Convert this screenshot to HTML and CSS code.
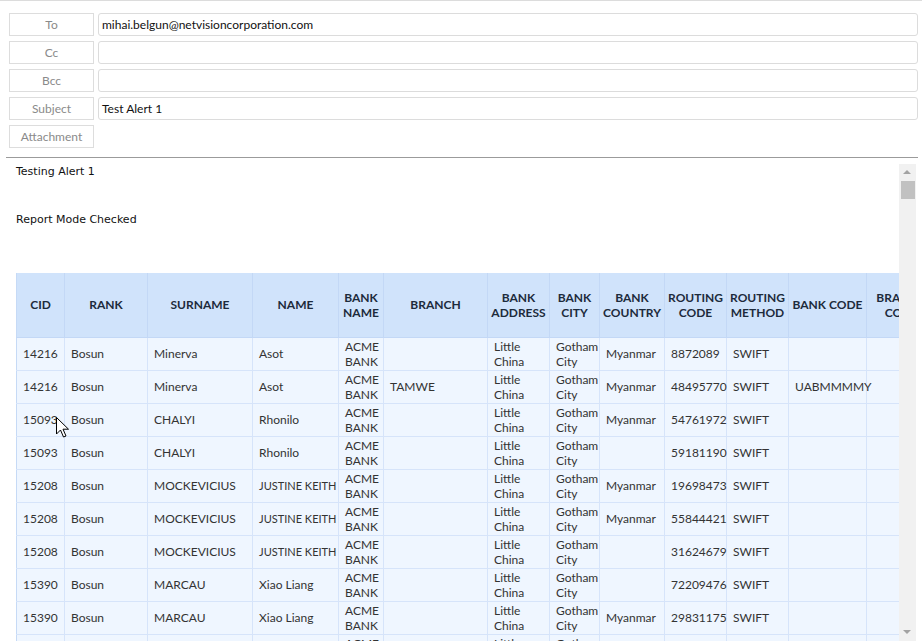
FILE: index.html
```html
<!DOCTYPE html>
<html lang="en">
<head>
  <meta charset="UTF-8" />
  <meta name="viewport" content="width=device-width, initial-scale=1.0" />
  <title>Compose – Test Alert 1</title>

  <!-- styles -->
  <link rel="stylesheet" href="styles.css">
</head>

<body>
  <!-- header fields -->
  <section class="fields">
    <div class="field"><span class="label">To</span><div class="input">mihai.belgun@netvisioncorporation.com</div></div>
    <div class="field"><span class="label">Cc</span><div class="input"></div></div>
    <div class="field"><span class="label">Bcc</span><div class="input"></div></div>
    <div class="field"><span class="label">Subject</span><div class="input">Test Alert 1</div></div>
    <div class="field"><span class="label">Attachment</span></div>
  </section>

  <!-- message body -->
  <main class="body">
    <div class="content">
      <p class="msg">Testing Alert 1</p>
      <p class="msg mode">Report Mode Checked</p>

      <table class="report">
        <colgroup>
          <col style="width:48px"><col style="width:83px"><col style="width:105px"><col style="width:86px">
          <col style="width:45px"><col style="width:104px"><col style="width:62px"><col style="width:50px">
          <col style="width:65px"><col style="width:62px"><col style="width:62px"><col style="width:78px">
          <col style="width:70px">
        </colgroup>
        <thead>
          <tr>
            <th>CID</th><th>RANK</th><th>SURNAME</th><th>NAME</th><th>BANK NAME</th><th>BRANCH</th>
            <th>BANK ADDRESS</th><th>BANK CITY</th><th>BANK COUNTRY</th><th>ROUTING CODE</th>
            <th>ROUTING METHOD</th><th class="one">BANK CODE</th><th>BRANCH CODE</th>
          </tr>
        </thead>
        <tbody>
          <tr><td>14216</td><td>Bosun</td><td>Minerva</td><td>Asot</td><td>ACME BANK</td><td></td><td>Little China</td><td>Gotham City</td><td>Myanmar</td><td>8872089</td><td>SWIFT</td><td></td><td></td></tr>
          <tr><td>14216</td><td>Bosun</td><td>Minerva</td><td>Asot</td><td>ACME BANK</td><td>TAMWE</td><td>Little China</td><td>Gotham City</td><td>Myanmar</td><td>48495770</td><td>SWIFT</td><td>UABMMMMY</td><td></td></tr>
          <tr><td>15093</td><td>Bosun</td><td>CHALYI</td><td>Rhonilo</td><td>ACME BANK</td><td></td><td>Little China</td><td>Gotham City</td><td>Myanmar</td><td>54761972</td><td>SWIFT</td><td></td><td></td></tr>
          <tr><td>15093</td><td>Bosun</td><td>CHALYI</td><td>Rhonilo</td><td>ACME BANK</td><td></td><td>Little China</td><td>Gotham City</td><td></td><td>59181190</td><td>SWIFT</td><td></td><td></td></tr>
          <tr><td>15208</td><td>Bosun</td><td>MOCKEVICIUS</td><td class="one">JUSTINE KEITH</td><td>ACME BANK</td><td></td><td>Little China</td><td>Gotham City</td><td>Myanmar</td><td>19698473</td><td>SWIFT</td><td></td><td></td></tr>
          <tr><td>15208</td><td>Bosun</td><td>MOCKEVICIUS</td><td class="one">JUSTINE KEITH</td><td>ACME BANK</td><td></td><td>Little China</td><td>Gotham City</td><td>Myanmar</td><td>55844421</td><td>SWIFT</td><td></td><td></td></tr>
          <tr><td>15208</td><td>Bosun</td><td>MOCKEVICIUS</td><td class="one">JUSTINE KEITH</td><td>ACME BANK</td><td></td><td>Little China</td><td>Gotham City</td><td></td><td>31624679</td><td>SWIFT</td><td></td><td></td></tr>
          <tr><td>15390</td><td>Bosun</td><td>MARCAU</td><td>Xiao Liang</td><td>ACME BANK</td><td></td><td>Little China</td><td>Gotham City</td><td></td><td>72209476</td><td>SWIFT</td><td></td><td></td></tr>
          <tr><td>15390</td><td>Bosun</td><td>MARCAU</td><td>Xiao Liang</td><td>ACME BANK</td><td></td><td>Little China</td><td>Gotham City</td><td>Myanmar</td><td>29831175</td><td>SWIFT</td><td></td><td></td></tr>
          <tr><td>15390</td><td>Bosun</td><td>MARCAU</td><td>Xiao Liang</td><td>ACME BANK</td><td></td><td>Little China</td><td>Gotham City</td><td>Myanmar</td><td>10477250</td><td>SWIFT</td><td></td><td></td></tr>
        </tbody>
      </table>
    </div>

    <!-- fake scrollbar -->
    <div class="scrollbar" aria-hidden="true">
      <span class="arrow up"></span>
      <span class="thumb"></span>
      <span class="track"></span>
      <span class="arrow down"></span>
    </div>
  </main>

  <!-- mouse pointer -->
  <svg class="cursor" width="13" height="21" viewBox="0 0 13 21" aria-hidden="true">
    <path d="M.5 .5v16.5l4-4 3 7 2.5-1-3-6.8h5.5z" fill="#fff" stroke="#000" stroke-width="1" stroke-linejoin="round"/>
  </svg>
</body>
</html>
```

FILE: styles.css
```css
/* ─── 0. reset ───────────────────────────── */
*,*::before,*::after{box-sizing:border-box;margin:0;padding:0}
html,body{width:100%;height:100%;overflow:hidden;background:#fff}
body{
  border-top:1px solid #dcdcdc;
  font-family:Lato,"Noto Sans",sans-serif;color:#222;
  display:flex;flex-direction:column;
}

/* ─── 1. header fields ───────────────────── */
.fields{display:flex;flex-direction:column;gap:5px;padding:12px 4px 0 9px}
.field{display:flex;gap:4px;height:23px}
.label{
  flex:0 0 85px;display:flex;align-items:center;justify-content:center;
  border:1px solid #dddddd;color:#8a8a8a;font-size:12px;
}
.input{
  flex:1;display:flex;align-items:center;padding-left:3px;
  border:1px solid #dcdcdc;border-radius:3px;font-size:12px;color:#111;
}

/* ─── 2. message body ────────────────────── */
.body{
  flex:1;min-height:0;display:flex;
  margin:9px 4px 0 6px;padding-top:6px;
  border-top:1px solid #9b9b9b;
}
.content{flex:1;min-width:0;overflow:hidden;padding-left:10px}
.msg{font-family:"DejaVu Sans",sans-serif;font-size:11px;line-height:14px;color:#111;padding-top:1px}
.mode{margin-top:33px}

.report{
  margin-top:46px;width:920px;table-layout:fixed;border-collapse:collapse;
  font-size:12px;line-height:15px;color:#333;
}
.report th{
  height:64px;padding:0 2px;background:#d0e3fb;
  border:1px solid #c3d8f6;border-top:0;
  color:#1d2b3c;font-weight:700;text-align:center;vertical-align:middle;
  overflow:hidden;
}
.report td{
  height:33px;padding:0 3px 0 6px;background:#eff6ff;
  border:1px solid #d6e4fa;vertical-align:middle;text-align:left;
}
.report .one{white-space:nowrap}
.report td.one{font-size:11px}
.report tr > :first-child{border-left:1px solid #c6daf6}

/* ─── 3. scrollbar ───────────────────────── */
.scrollbar{flex:0 0 17px;display:flex;flex-direction:column;align-items:center;background:#f1f1f1;margin-right:2px}
.arrow{flex:0 0 17px;width:17px;position:relative}
.arrow::after{
  content:"";position:absolute;left:4px;top:6px;
  border-left:4px solid transparent;border-right:4px solid transparent;
}
.arrow.up::after{border-bottom:4px solid #a3a3a3}
.arrow.down::after{border-top:4px solid #a3a3a3}
.thumb{flex:0 0 18px;width:14px;background:#c1c1c1}
.track{flex:1}

/* pointer overlaid on the grid */
.cursor{position:absolute;left:56px;top:417px;pointer-events:none}
```
